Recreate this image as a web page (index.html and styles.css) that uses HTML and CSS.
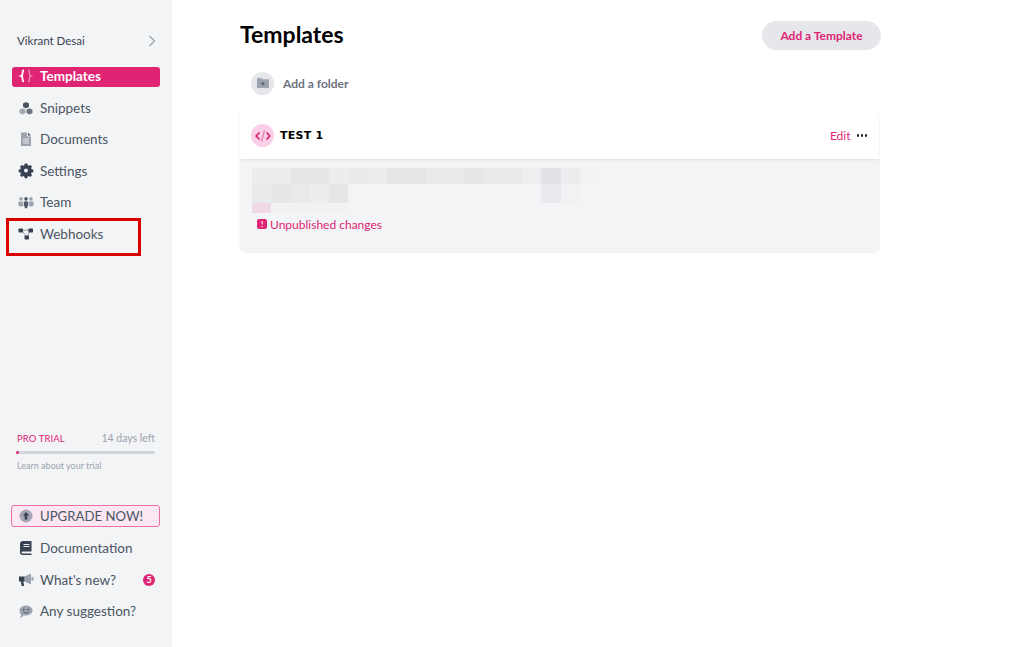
FILE: index.html
```html
<!DOCTYPE html>
<html lang="en">
<head>
<meta charset="utf-8">
<title>Templates</title>
<link rel="stylesheet" href="styles.css">
</head>
<body>
<div class="app">
  <aside class="sidebar">
    <div class="user"><span>Vikrant Desai</span>
      <svg class="chev" width="8" height="12" viewBox="0 0 8 12"><path d="M1.500 1l5 5-5 5" fill="none" stroke="#9ca3af" stroke-width="1.300"/></svg>
    </div>
    <nav class="nav primary">
      <a class="item active">
        <svg class="ico" width="16" height="16" viewBox="0 0 16 16"><path d="M6 2.500C4.400 2.500 4.600 3.500 4.600 5.200c0 1.600-.4 2.400-1.600 2.800 1.200.4 1.600 1.200 1.600 2.800 0 1.700-.2 2.700 1.400 2.700" fill="none" stroke="#fff" stroke-width="1.800"/><path d="M10 2.500c1.600 0 1.400 1 1.400 2.700 0 1.600.4 2.400 1.600 2.800-1.200.4-1.600 1.200-1.600 2.800 0 1.700.2 2.700-1.400 2.700" fill="none" stroke="#ee86b4" stroke-width="1.500"/></svg>
        <span>Templates</span></a>
      <a class="item">
        <svg class="ico" width="16" height="16" viewBox="0 0 16 16"><path d="M8 2l3 1.600v3.200L8 8.400 5 6.800V3.600z" fill="#4b5563"/><path d="M4.500 8.200l3 1.600V13l-3 1.600L1.500 13V9.800z" fill="#a3a9b3"/><path d="M11.500 8.200l3 1.600V13l-3 1.600-3-1.600V9.800z" fill="#6b7280"/></svg>
        <span>Snippets</span></a>
      <a class="item">
        <svg class="ico" width="16" height="16" viewBox="0 0 16 16"><path d="M3 1.500h6v4h4v9.500H3z" fill="#9ca3af"/><path d="M10 1.500l3 3h-3z" fill="#4b5563"/><path d="M5 8h6M5 10h6M5 12h6" stroke="#e5e7eb" stroke-width="1"/></svg>
        <span>Documents</span></a>
      <a class="item">
        <svg class="ico" width="16" height="16" viewBox="0 0 16 16"><path fill-rule="evenodd" fill="#374151" d="M6.700 1.500h2.600l.4 1.700 1.100.5 1.500-.9 1.700 1.700-.9 1.500.5 1.100 1.700.4v2.600l-1.700.4-.5 1.100.9 1.500-1.700 1.700-1.500-.9-1.100.5-.4 1.700H6.700l-.4-1.700-1.100-.5-1.500.9-1.700-1.700.9-1.500-.5-1.100-1.700-.4V7.500l1.700-.4.5-1.100-.9-1.500 1.700-1.700 1.500.9 1.100-.5zM8 6.500a2 2 0 1 0 0 4 2 2 0 0 0 0-4z" transform="translate(0 -.9)"/></svg>
        <span>Settings</span></a>
      <a class="item">
        <svg class="ico" width="16" height="16" viewBox="0 0 18 16"><circle cx="9" cy="4.500" r="2" fill="#4b5563"/><path d="M6.500 7.500h5v5h-1v2.500h-3v-2.500h-1z" fill="#4b5563"/><circle cx="3.500" cy="4.500" r="2" fill="#9ca3af"/><circle cx="14.500" cy="4.500" r="2" fill="#9ca3af"/><path d="M.5 7.500h5v5.500H2L.5 12zM12.500 7.500h5V12L16 13h-3.500z" fill="#9ca3af"/></svg>
        <span>Team</span></a>
      <a class="item">
        <svg class="ico" width="16" height="16" viewBox="0 0 16 16"><path d="M4 4.200h8M4.500 5.500l4 5M11.500 5.500l-2 5" stroke="#6b7280" stroke-width=".7"/><rect x="0.500" y="2.500" width="4.500" height="4" rx=".7" fill="#374151"/><rect x="10.500" y="2.500" width="4.500" height="4" rx=".7" fill="#374151"/><rect x="6.500" y="9.500" width="4.500" height="4" rx=".7" fill="#374151"/></svg>
        <span>Webhooks</span></a>
    </nav>
    <div class="trial">
      <div class="trial-head"><span class="pro">PRO TRIAL</span><span class="days">14 days left</span></div>
      <div class="bar"><div class="bar-fill"></div></div>
      <div class="learn">Learn about your trial</div>
    </div>
    <a class="upgrade">
      <svg class="up-ico" width="14" height="14" viewBox="0 0 14 14"><circle cx="7" cy="7" r="6.500" fill="#a5a6b5"/><path d="M7 3l3.200 3.600H8.300V10.500H5.700V6.600H3.800z" fill="#374151"/></svg>
      <span>UPGRADE NOW!</span></a>
    <nav class="nav bottom">
      <a class="item">
        <svg class="ico" width="16" height="16" viewBox="0 0 16 16"><path d="M5 1h8.500v10.500H5c-1 0-1.500.5-1.500 1s.5 1 1.500 1h8.500V15H4.500C3 15 2 14 2 12.500V4c0-1.800 1.200-3 3-3z" fill="#374151"/><path d="M5.500 4.500h6M5.500 6.500h6" stroke="#e5e7eb" stroke-width="1"/></svg>
        <span>Documentation</span></a>
      <a class="item">
        <svg class="ico" width="16" height="16" viewBox="0 0 16 16"><path d="M6.500 4.500L13 1.500v11l-6.500-3z" fill="#9ca3af"/><path d="M1 4.500h5.500v5H5.300l.9 4.500H3.700L2.800 9.500H1z" fill="#374151"/><rect x="13.500" y="5" width="2" height="3.500" fill="#9ca3af"/></svg>
        <span>What's new?</span><b class="badge">5</b></a>
      <a class="item">
        <svg class="ico" width="16" height="16" viewBox="0 0 16 16"><path d="M8 2.500c3.600 0 6.500 2.200 6.500 5s-2.900 5-6.500 5c-.8 0-1.600-.1-2.300-.3C4.700 14 3.300 14.500 1.800 14.500c.8-.8 1.300-1.800 1.300-3C2.100 10.500 1.500 9 1.500 7.500c0-2.800 2.900-5 6.500-5z" fill="#9ca3af"/><circle cx="5.800" cy="6.500" r=".8" fill="#374151"/><circle cx="10.200" cy="6.500" r=".8" fill="#374151"/><path d="M5.500 9c1.500 1.300 3.500 1.300 5 0" fill="none" stroke="#374151" stroke-width=".8"/></svg>
        <span>Any suggestion?</span></a>
    </nav>
  </aside>
  <main class="main">
    <header class="head">
      <h1>Templates</h1>
      <a class="btn">Add a Template</a>
    </header>
    <div class="folder">
      <span class="folder-ico"><svg width="12" height="10" viewBox="0 0 12 10"><path d="M0 1c0-.5.400-1 1-1h3.500l1 1.300H11c.6 0 1 .4 1 1V9c0 .6-.4 1-1 1H1c-.6 0-1-.4-1-1z" fill="#9ca3af"/><path d="M6 4v3.400M4.300 5.700h3.400" stroke="#4b5563" stroke-width="1"/></svg></span>
      <span>Add a folder</span>
    </div>
    <section class="card">
      <div class="card-head">
        <span class="code-ico"><svg width="16" height="14" viewBox="0 0 16 14"><path d="M4.500 3.500L1.200 7l3.300 3.500M11.500 3.500L14.800 7l-3.300 3.500" fill="none" stroke="#df2474" stroke-width="1.700"/><path d="M9.500 1.500L6.500 12.500" stroke="#ec7fb0" stroke-width="1.300"/></svg></span>
        <span class="name">TEST 1</span>
        <a class="edit">Edit</a>
        <span class="dots"><i></i><i></i><i></i></span>
      </div>
      <div class="card-body">
        <div class="mosaic r1">
          <i class="m1"></i><i class="m1"></i><i class="m3"></i><i class="m3"></i><i class="m1"></i><i class="m2"></i><i class="m1"></i><i class="m3"></i><i class="m3"></i><i class="m2"></i><i class="m2"></i><i class="m3"></i><i class="m2"></i><i class="m2"></i><i class="m0"></i><i class="m4"></i><i class="m1"></i><i class="m5"></i>
        </div>
        <div class="mosaic r2">
          <i class="m2"></i><i class="m3"></i><i class="m2"></i><i class="m1"></i><i class="m3"></i><i class="e"></i><i class="e"></i><i class="e"></i><i class="e"></i><i class="e"></i><i class="e"></i><i class="e"></i><i class="e"></i><i class="e"></i><i class="e"></i><i class="m6"></i><i class="m5"></i><i class="e"></i>
        </div>
        <div class="mosaic r3">
          <i class="pink"></i><i class="m5"></i><i class="m5"></i><i class="m5"></i><i class="m5"></i>
        </div>
        <div class="status">
          <span class="warn">!</span><span>Unpublished changes</span>
        </div>
      </div>
    </section>
  </main>
</div>
<div class="callout"></div>
</body>
</html>
```
FILE: styles.css
```css
* { box-sizing: border-box; }
html, body { margin: 0; height: 100%; }
body { font-family: "Lato", "Open Sans", sans-serif; color: #4b5563; background: #fff; overflow: hidden; position: relative; }
.app { display: flex; height: 647px; }

.sidebar { width: 172px; flex: none; background: #f3f4f6; display: flex; flex-direction: column; padding: 30px 12px 0; }
.user { display: flex; align-items: center; justify-content: space-between; height: 20px; padding: 0 5px; font-size: 11.500px; color: #374151; }
.chev { margin: 1px -1px 0 0; }
.nav { display: flex; flex-direction: column; gap: 11.500px; margin-top: 16px; }
.primary { margin-top: 17px; }
.primary .item > * { margin-bottom: 2px; }
.item { display: flex; align-items: center; height: 20px; width: 148px; padding-left: 6px; border-radius: 3px; font-size: 13.500px; color: #4b5563; position: relative; }
.item span { margin-left: 6px; }
.ico { flex: none; width: 16px; }
.active { background: #df2474; color: #fff; font-weight: 700; }

.trial { margin-top: auto; padding: 0 5px 0 4px; }
.trial-head { display: flex; justify-content: space-between; align-items: center; height: 12px; }
.pro { font-size: 9.500px; letter-spacing: .1px; color: #df2474; margin-left: 1px; }
.days { font-size: 10.500px; color: #9ca3af; }
.bar { height: 3px; margin-top: 7px; background: #d1d5db; border-radius: 2px; }
.bar-fill { width: 3px; height: 3px; background: #df2474; border-radius: 2px; }
.learn { font-size: 9px; color: #9ca3af; margin: 6px 0 0 1px; line-height: 12px; }

.upgrade { display: flex; align-items: center; height: 22px; width: 149px; margin: 33px 0 0 -1px; padding-left: 7px; background: #fde7f3; border: 1px solid #ec6fa5; border-radius: 3px; font-size: 13.200px; color: #4b5563; }
.up-ico { flex: none; }
.upgrade span { margin-left: 7px; }

.bottom { margin-top: 11px; margin-bottom: 26px; }
.badge { position: absolute; right: 5px; top: 4px; width: 12px; height: 12px; border-radius: 50%; background: #df2474; color: #fff; font-size: 9px; font-weight: 700; line-height: 12px; text-align: center; }

.main { flex: none; width: 639px; margin-left: 68px; }
.head { display: flex; align-items: center; justify-content: space-between; height: 28px; margin-top: 21px; }
h1 { margin: 0 0 2px; font-size: 23px; font-weight: 700; color: #000; }
.btn { display: block; width: 119px; height: 29px; margin-right: -2px; border-radius: 15px; background: #e5e7eb; color: #df2474; font-size: 12px; font-weight: 700; line-height: 29px; text-align: center; }

.folder { display: flex; align-items: center; gap: 9px; height: 24px; margin: 22px 0 0 11px; font-size: 12px; font-weight: 700; color: #6b7280; }
.folder-ico { display: flex; align-items: center; justify-content: center; width: 23px; height: 23px; border-radius: 50%; background: #e5e7eb; }

.card { margin-top: 17px; border-radius: 6px; box-shadow: 0 1px 3px rgba(0,0,0,.1); overflow: hidden; }
.card-head { display: flex; align-items: center; height: 47px; padding: 0 11px; background: #fff; box-shadow: 0 1px 2px rgba(0,0,0,.08); position: relative; }
.code-ico { display: flex; align-items: center; justify-content: center; width: 23px; height: 23px; border-radius: 50%; background: #fbcfe8; }
.name { margin-left: 6px; font-family: "DejaVu Sans", sans-serif; font-size: 11px; font-weight: 700; color: #000; letter-spacing: .25px; }
.edit { margin-left: auto; margin-right: 1px; font-size: 12px; color: #df2474; }
.dots { display: flex; gap: 1.500px; margin-left: 5px; margin-right: 1px; }
.dots i { width: 2.500px; height: 2.500px; border-radius: 50%; background: #222; }

.card-body { background: #f3f4f6; height: 92px; padding: 9px 12px 0; }
.mosaic { display: flex; }
.mosaic i { flex: none; width: 19.300px; }
.r1 i { height: 16px; }
.r2 i { height: 19px; }
.r3 i { height: 10px; }
.m0 { background: #eeeef0; }
.m1 { background: #ecedef; }
.m2 { background: #e9eaec; }
.m3 { background: #e5e6e8; }
.m4 { background: #e1e2e6; }
.m5 { background: #f1f2f4; }
.m6 { background: #e9eaee; }
.pink { background: #f0d8e4; }
.status { display: flex; align-items: center; gap: 3px; height: 16px; margin: 3px 0 0 5px; font-size: 12px; color: #df2474; }
.warn { display: block; width: 10px; height: 10px; border-radius: 2px; background: #df2474; color: #fff; font-size: 8px; font-weight: 700; line-height: 10px; text-align: center; }

.callout { position: absolute; left: 6px; top: 218px; width: 135px; height: 38px; border: 3px solid #d90000; }
```
